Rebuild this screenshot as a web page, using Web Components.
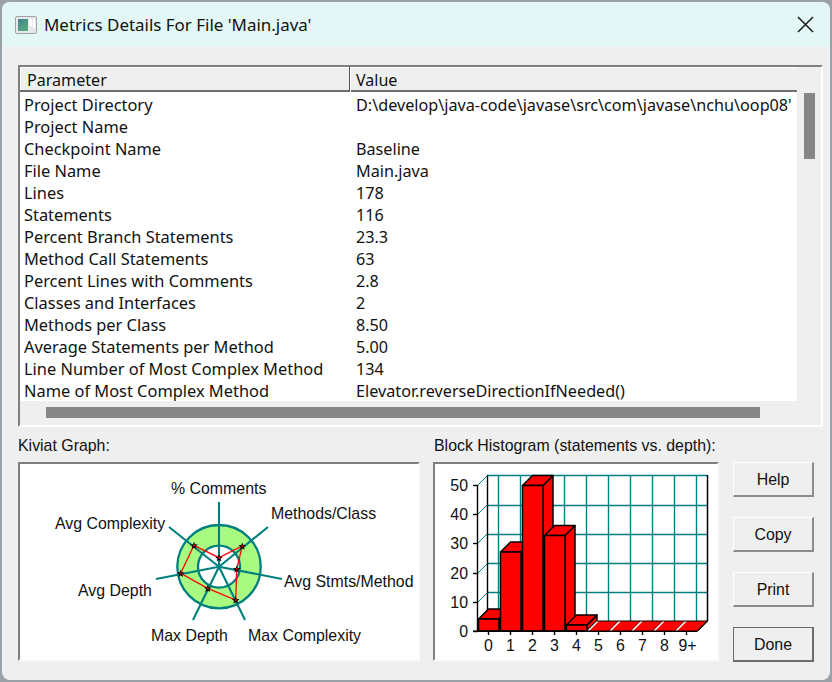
<!DOCTYPE html>
<html lang="en">
<head>
<meta charset="utf-8">
<title>Metrics Details</title>
<style>
	html, body { margin: 0; height: 100%; background: #9aa2a8; overflow: hidden; }
</style>
</head>
<body>

<metrics-window>
	<title-bar slot="title">Metrics Details For File 'Main.java'</title-bar>
	<metrics-table slot="table"></metrics-table>
	<inset-panel slot="kiviat" label="Kiviat Graph:" width="402"><kiviat-graph></kiviat-graph></inset-panel>
	<inset-panel slot="histogram" label="Block Histogram (statements vs. depth):" width="286" indent="1"><block-histogram></block-histogram></inset-panel>
	<dlg-button slot="buttons">Help</dlg-button>
	<dlg-button slot="buttons">Copy</dlg-button>
	<dlg-button slot="buttons">Print</dlg-button>
	<dlg-button slot="buttons" default>Done</dlg-button>
</metrics-window>

<script>
	// small helper so every element below can set its shadow content in one line
	class ShadowElement extends HTMLElement {
		render(html) {
			if (!this.shadowRoot) this.attachShadow({ mode: 'open' });
			this.shadowRoot.innerHTML = html;
		}
	}

	class MetricsWindow extends ShadowElement {
		connectedCallback() {
			this.render(`
			<style>
				:host { display: flex; flex-direction: column; box-sizing: border-box; width: 828px; height: 678px; margin: 2px; background: #efefef; border-radius: 8px; overflow: hidden; }
				.body { display: flex; flex-direction: column; padding: 18px 0 0 16px; }
				.lower { display: flex; margin-top: 8px; }
				.gap { width: 13px; }
				.buttons { display: flex; flex-direction: column; gap: 20px; margin: 27px 0 0 14px; }
			</style>
			<slot name="title"></slot>
			<div class="body">
				<slot name="table"></slot>
				<div class="lower">
					<slot name="kiviat"></slot>
					<div class="gap"></div>
					<slot name="histogram"></slot>
					<div class="buttons"><slot name="buttons"></slot></div>
				</div>
			</div>`);
		}
	}

	class TitleBar extends ShadowElement {
		connectedCallback() {
			this.render(`
			<style>
				:host { display: flex; align-items: center; height: 45px; flex: none; background: #e3f7f6; padding: 0 15px 0 13px; font: 16.95px "Noto Sans", sans-serif; color: #111; }
				.icon { width: 22px; height: 18px; margin-right: 7px; flex: none; }
				.text { flex: 1; }
				.close { width: 17px; height: 17px; margin-right: 1px; }
			</style>
			<svg class="icon" viewBox="0 0 22 18">
				<defs><linearGradient id="g" x1="0" y1="0" x2="0.6" y2="1"><stop offset="0" stop-color="#44808f"/><stop offset="1" stop-color="#56a87e"/></linearGradient></defs>
				<rect x="0.5" y="0.5" width="21" height="17" rx="1.5" fill="#e6e9e9" stroke="#9da2a3"/>
				<rect x="3" y="3" width="10" height="12" fill="url(#g)"/>
				<rect x="14" y="3" width="3" height="7" fill="#fff"/>
				<rect x="18" y="3" width="2" height="9" fill="#fff"/>
			</svg>
			<span class="text"><slot></slot></span>
			<svg class="close" viewBox="0 0 17 17"><path d="M1 1 L16 16 M16 1 L1 16" stroke="#1a1a1a" stroke-width="1.5" fill="none"/></svg>`);
		}
	}

	const ROWS = [
		['Project Directory', "D:\\develop\\java-code\\javase\\src\\com\\javase\\nchu\\oop08'"],
		['Project Name', ''],
		['Checkpoint Name', 'Baseline'],
		['File Name', 'Main.java'],
		['Lines', '178'],
		['Statements', '116'],
		['Percent Branch Statements', '23.3'],
		['Method Call Statements', '63'],
		['Percent Lines with Comments', '2.8'],
		['Classes and Interfaces', '2'],
		['Methods per Class', '8.50'],
		['Average Statements per Method', '5.00'],
		['Line Number of Most Complex Method', '134'],
		['Name of Most Complex Method', 'Elevator.reverseDirectionIfNeeded()'],
	];

	class MetricsTable extends ShadowElement {
		connectedCallback() {
			const rows = ROWS.map(r => `<div class="row"><span class="p">${r[0]}</span><span class="v">${r[1]}</span></div>`).join('');
			this.render(`
			<style>
				:host { display: grid; grid-template-columns: 777px 23px; grid-template-rows: 334px 24px; box-sizing: border-box; width: 805px; height: 362px; border: 2px solid; border-color: #7f7f7f #fff #fff #7f7f7f; font: 16px "Noto Sans", sans-serif; color: #111; }
				.main { display: flex; flex-direction: column; min-width: 0; }
				.head { display: grid; grid-template-columns: 329px 1fr; height: 23px; flex: none; border-bottom: 2px solid #6e6e6e; line-height: 26px; box-shadow: inset 1px 1px 0 #fff; }
				.head span:first-child { padding-left: 7px; font-size: 16.1px; }
				.head span + span { border-left: 1px solid #555; box-shadow: inset 1px 0 0 #fff; padding-left: 6px; }
				.list { flex: 1; background: #fff; padding-top: 2px; overflow: hidden; }
				.row { display: grid; grid-template-columns: 332px 1fr; height: 22px; line-height: 22px; padding-left: 4px; white-space: nowrap; }
				.p { font-size: 16.4px; overflow: hidden; }
				.v { font-size: 16.2px; overflow: hidden; }
				.vbar { padding: 26px 7px 0 7px; }
				.vbar i { display: block; height: 66px; width: 11px; background: #868686; }
				.hbar { grid-column: 1 / 3; padding: 6px 0 0 26px; }
				.hbar i { display: block; height: 11px; width: 714px; background: #868686; }
			</style>
			<div class="main">
				<div class="head"><span>Parameter</span><span>Value</span></div>
				<div class="list">${rows}</div>
			</div>
			<div class="vbar"><i></i></div>
			<div class="hbar"><i></i></div>`);
		}
	}

	class InsetPanel extends ShadowElement {
		connectedCallback() {
			const w = this.getAttribute('width');
			this.render(`
			<style>
				:host { display: flex; flex-direction: column; width: ${w}px; font: 15.9px "Liberation Sans", sans-serif; color: #111; }
				.label { height: 27px; line-height: 22px; white-space: nowrap; padding-left: ${this.getAttribute('indent') || 0}px; }
				.frame { box-sizing: border-box; height: 199px; background: #fff; border: 2px solid; border-color: #7f7f7f #fbfbfb #fbfbfb #7f7f7f; overflow: hidden; }
			</style>
			<div class="label">${this.getAttribute('label')}</div>
			<div class="frame"><slot></slot></div>`);
		}
	}

	class KiviatGraph extends ShadowElement {
		connectedCallback() {
			const cx = 219, cy = 566.7;
			const spokes = [[219, 502], [268, 527], [282, 579], [245, 620], [193, 620], [156, 579], [169, 527]];
			const pts = [[219, 557.7], [242.3, 546], [236.7, 569], [235.7, 600], [207.7, 588.3], [180.7, 573.3], [194, 545.3]];
			const labels = [['% Comments', 171, 494], ['Methods/Class', 271, 519], ['Avg Complexity', 55, 529], ['Avg Stmts/Method', 284, 587], ['Avg Depth', 78, 596], ['Max Depth', 151, 641], ['Max Complexity', 248, 641]];
			const star = p => `<path d="M${p[0]} ${p[1] - 3.5} l1 2.5 l2.8 .2 l-2.2 1.7 l.8 2.8 l-2.4 -1.6 l-2.4 1.6 l.8 -2.8 l-2.2 -1.7 l2.8 -.2 z" fill="#000"/><circle cx="${p[0]}" cy="${p[1]}" r="1.1" fill="#e00"/>`;
			this.render(`
			<style>
				:host { display: block; }
				svg { display: block; }
				text { font: 15.9px "Liberation Sans", sans-serif; fill: #111; }
			</style>
			<svg width="400" height="195" viewBox="20 464 400 195">
				<circle cx="${cx}" cy="${cy}" r="41.7" fill="#a8fb80" stroke="#007f7f" stroke-width="2.3"/>
				<circle cx="${cx}" cy="${cy}" r="21" fill="#fff" stroke="#007f7f" stroke-width="2.3"/>
				${spokes.map(s => `<line x1="${cx}" y1="${cy}" x2="${s[0]}" y2="${s[1]}" stroke="#007f7f" stroke-width="2.1"/>`).join('')}
				<polygon points="${pts.map(p => p.join(',')).join(' ')}" fill="none" stroke="#f00" stroke-width="1.3"/>
				${pts.map(star).join('')}
				${labels.map(l => `<text x="${l[1]}" y="${l[2]}">${l[0]}</text>`).join('')}
			</svg>`);
		}
	}

	class BlockHistogram extends ShadowElement {
		connectedCallback() {
			const base = 631, d = 10;
			const tops = [619, 552, 485.5, 535.5, 625, 631, 631, 631, 631, 631];
			const names = ['0', '1', '2', '3', '4', '5', '6', '7', '8', '9+'];
			let s = '';
			// back wall grid, on pixel centres so the lines stay crisp
			[475.5, 505.5, 534.5, 563.5, 592.5].forEach(y => s += `<line x1="487" y1="${y}" x2="707" y2="${y}" stroke="#008080" stroke-width="1.4"/>`);
			for (let i = 0; i < 10; i++) { const x = 498.5 + i * 22; s += `<line x1="${x}" y1="475" x2="${x}" y2="621" stroke="#008080" stroke-width="1.4"/>`; }
			// side walls, diagonals out to the y axis
			[0, 10, 20, 30, 40, 50].forEach((v, i) => {
				const y = Math.round(631 - i * 29.2) + .5;
				s += `<line x1="473" y1="${y}" x2="477.5" y2="${y}" stroke="#000" stroke-width="1.4"/>`;
				if (i) s += `<line x1="477.5" y1="${y}" x2="487.5" y2="${y - 10}" stroke="#008080" stroke-width="1"/>`;
				s += `<text x="468" y="${y + 5.5}" text-anchor="end">${v}</text>`;
			});
			s += `<line x1="477.5" y1="485" x2="477.5" y2="631" stroke="#000" stroke-width="1.4"/>`;
			s += `<line x1="487.5" y1="475.5" x2="487.5" y2="621" stroke="#000" stroke-width="1.4"/>`;
			s += `<line x1="707.5" y1="475" x2="707.5" y2="621" stroke="#000" stroke-width="1.5"/>`;
			s += `<line x1="477.5" y1="631" x2="487.5" y2="621" stroke="#000"/>`;
			// bars: later bars cover the side of earlier ones
			tops.forEach((t, i) => {
				const x0 = 478.5 + i * 22, x1 = x0 + 20.5;
				const st = 'fill="#f00" stroke="#000" stroke-width="1.5" stroke-linejoin="round"';
				const flat = t === base;
				if (!flat) s += `<path d="M${x1} ${t} l${d} -${d} V${base - d} L${x1} ${base} Z" ${st}/>`;
				s += `<path d="M${x0} ${t} l${d} -${d} H${x1 + d} L${x1} ${t} Z" ${flat ? 'fill="#f00"' : st}/>`;
				if (!flat) s += `<rect x="${x0}" y="${t}" width="20.5" height="${base - t}" ${st}/>`;
				const cx = Math.round(x0 + 9.6) + .5;
				s += `<line x1="${cx}" y1="${base}" x2="${cx}" y2="${base + 4}" stroke="#000" stroke-width="1.4"/>`;
				s += `<text x="${cx + (i === 9 ? 1 : 0)}" y="651" text-anchor="middle">${names[i]}</text>`;
			});
			// white seams between the empty bars
			for (let i = 5; i < 10; i++) {
				const x = 588 + (i - 5) * 22;
				s += `<line x1="${x - 1.4}" y1="${base}" x2="${x - 1.4 + d}" y2="${base - d}" stroke="#000" stroke-width="1"/>`;
				s += `<line x1="${x}" y1="${base}" x2="${x + d}" y2="${base - d}" stroke="#fff" stroke-width="1.5"/>`;
			}
			s += `<line x1="473" y1="631.2" x2="697.5" y2="631.2" stroke="#000" stroke-width="1.5"/>`;
			s += `<line x1="697.5" y1="631" x2="707.5" y2="621" stroke="#000" stroke-width="1.3"/>`;
			s += `<line x1="597" y1="621" x2="707.5" y2="621" stroke="#000" stroke-width="1.2"/>`;
			this.render(`
			<style>
				:host { display: block; }
				svg { display: block; }
				text { font: 15.9px "Liberation Sans", sans-serif; fill: #111; }
			</style>
			<svg width="284" height="195" viewBox="435 464 284 195">${s}</svg>`);
		}
	}

	class DlgButton extends ShadowElement {
		connectedCallback() {
			const isDefault = this.hasAttribute('default');
			this.render(`
			<style>
				:host { display: block; }
				div { box-sizing: border-box; width: 81px; height: 35px; padding-top: 2px; display: flex; align-items: center; justify-content: center; background: #efefef; font: 15.9px "Liberation Sans", sans-serif; color: #111;
					border: solid; border-width: 1px 2px 2px 1px; border-color: ${isDefault ? '#6c6c6c' : '#fff #8c8c8c #8c8c8c #fff'}; }
			</style>
			<div><slot></slot></div>`);
		}
	}

	customElements.define('metrics-window', MetricsWindow);
	customElements.define('title-bar', TitleBar);
	customElements.define('metrics-table', MetricsTable);
	customElements.define('inset-panel', InsetPanel);
	customElements.define('kiviat-graph', KiviatGraph);
	customElements.define('block-histogram', BlockHistogram);
	customElements.define('dlg-button', DlgButton);
</script>

</body>
</html>
